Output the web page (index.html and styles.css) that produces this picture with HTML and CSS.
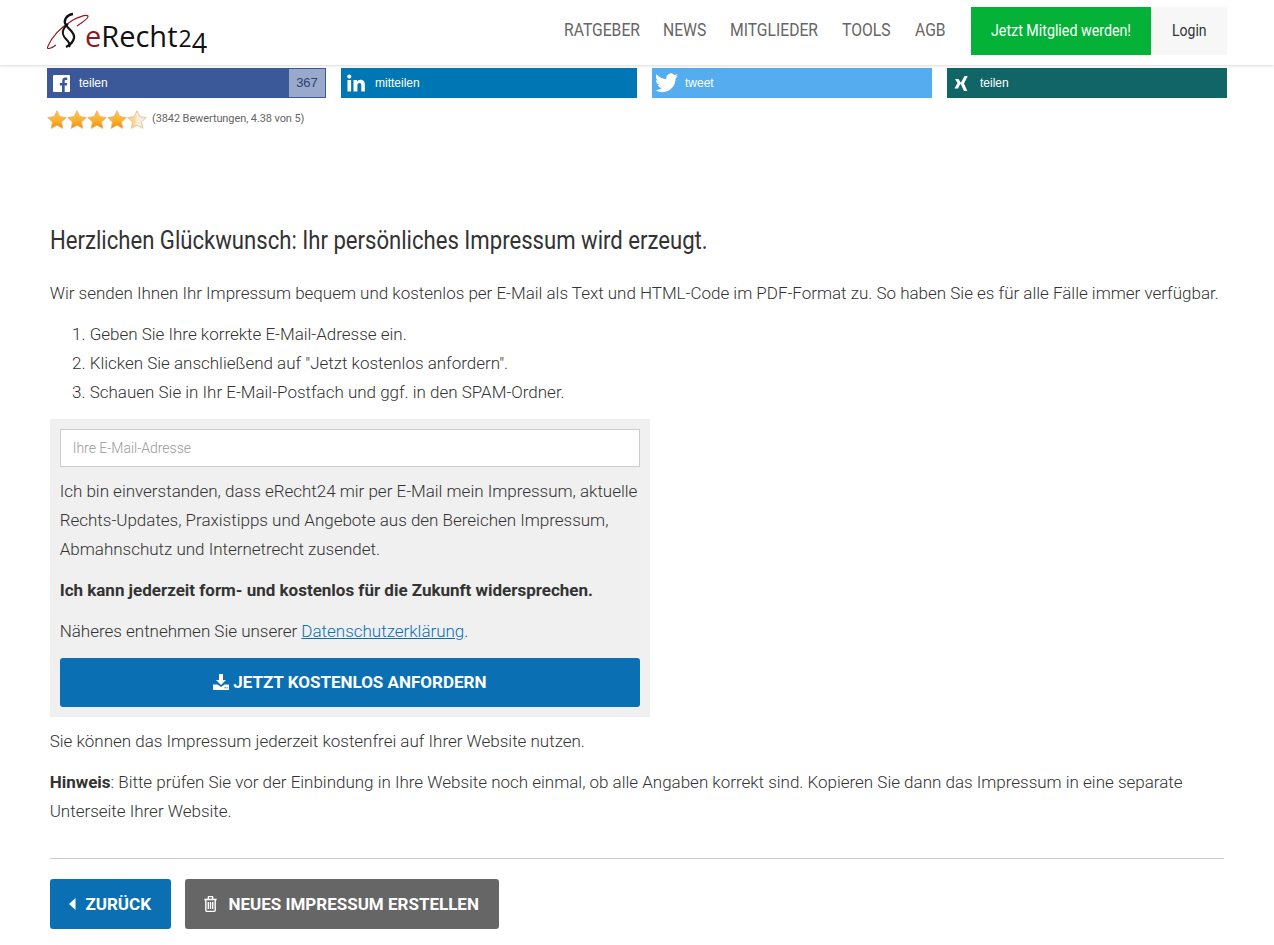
FILE: index.html
```html
<!DOCTYPE html>
<html lang="de">
<head>
<meta charset="utf-8">
<title>Impressum</title>
<link rel="stylesheet" href="styles.css">
</head>
<body>
<header class="topbar">
  <div class="topbar-inner">
    <a class="logo" href="#">
      <svg class="logo-mark" width="42" height="40" viewBox="0 0 42 40" aria-hidden="true">
        <path d="M.5 35 C5 24 16 14 26 8 C32 5 39 2 41 4 C42 6 36 10 30 14 M.5 35 C0 38 5 36 9 33" fill="none" stroke="#8d1a1f" stroke-width="1.200"/>
        <path d="M26 2 C19 3 16 9 19 13 C22 18 28 20 27 26 C26 31 23 33 19 35" fill="none" stroke="#111" stroke-width="2.300"/>
        <path d="M21 12 C15 17 14 22 19 27 C21 29 24 32 22 35" fill="none" stroke="#111" stroke-width="2"/>
      </svg>
      <span class="logo-text"><span class="logo-e">e</span>Recht<span class="logo-two">2</span><span class="logo-four">4</span></span>
    </a>
    <nav class="nav">
      <a class="nav-link" href="#"><span class="cond">RATGEBER</span></a>
      <a class="nav-link" href="#"><span class="cond">NEWS</span></a>
      <a class="nav-link" href="#"><span class="cond">MITGLIEDER</span></a>
      <a class="nav-link" href="#"><span class="cond">TOOLS</span></a>
      <a class="nav-link" href="#"><span class="cond">AGB</span></a>
      <a class="nav-cta" href="#"><span class="cond">Jetzt Mitglied werden!</span></a>
      <a class="nav-login" href="#"><span class="cond">Login</span></a>
    </nav>
  </div>
</header>

<div class="share">
  <a class="share-btn fb" href="#">
    <svg class="share-icon" width="17" height="17" viewBox="0 0 17 17" aria-hidden="true"><rect width="17" height="17" rx="1" fill="#fff"/><path d="M11.700 17v-6.500h2.200l.3-2.600h-2.500V6.300c0-.8.2-1.300 1.300-1.300h1.300V2.700c-.3 0-1-.1-1.900-.1-1.900 0-3.200 1.200-3.200 3.300v2H6.800v2.600H9V17z" fill="#3b5998"/></svg>
    <span class="share-label fb-label">teilen</span>
    <span class="share-count">367</span>
  </a>
  <a class="share-btn li" href="#">
    <svg class="share-icon" width="18" height="18" viewBox="0 0 18 18" aria-hidden="true"><path d="M.5 6h3.600v11.500H.5zM2.300.5a2.100 2.100 0 1 1 0 4.200 2.100 2.100 0 0 1 0-4.200zM6.500 6H10v1.600c.5-.9 1.700-1.900 3.500-1.900 3.700 0 4.400 2.400 4.400 5.600v6.200h-3.600V12c0-1.300 0-3-1.800-3s-2.100 1.400-2.100 2.900v5.600H6.500z" fill="#fff"/></svg>
    <span class="share-label">mitteilen</span>
  </a>
  <a class="share-btn tw" href="#">
    <svg class="share-icon tw-icon" width="23" height="20" viewBox="0 0 24 20" aria-hidden="true"><path d="M24 2.400c-.9.400-1.800.7-2.800.8 1-.6 1.800-1.600 2.200-2.700-1 .6-2 1-3.100 1.200A4.900 4.900 0 0 0 11.900 6.200C7.800 6 4.200 4 1.700.9c-.4.700-.7 1.600-.7 2.500 0 1.700.9 3.200 2.200 4.100-.8 0-1.600-.2-2.200-.6v.1c0 2.400 1.700 4.400 3.900 4.800-.4.100-.8.200-1.300.2-.3 0-.6 0-.9-.1.600 2 2.400 3.400 4.600 3.400A9.900 9.900 0 0 1 0 17.400 14 14 0 0 0 7.500 19.600c9.100 0 14-7.500 14-14v-.6c1-.7 1.800-1.600 2.500-2.600z" fill="#fff"/></svg>
    <span class="share-label tw-label">tweet</span>
  </a>
  <a class="share-btn xi" href="#">
    <svg class="share-icon" width="15" height="19" viewBox="0 0 15 19" aria-hidden="true"><path d="M2 5h3.500l2.500 4-3 5.500H1.500l3-5.500zM11.500 2h3.300L11 9.500 14.300 17H11L7.500 9.500z" fill="#fff"/></svg>
    <span class="share-label xi-label">teilen</span>
  </a>
</div>

<div class="rating">
  <div class="stars">
    <svg class="star" width="20" height="19" viewBox="0.4 0.3 19.2 18.4" aria-hidden="true"><use href="#star-full"/></svg>
    <svg class="star" width="20" height="19" viewBox="0.4 0.3 19.2 18.4" aria-hidden="true"><use href="#star-full"/></svg>
    <svg class="star" width="20" height="19" viewBox="0.4 0.3 19.2 18.4" aria-hidden="true"><use href="#star-full"/></svg>
    <svg class="star" width="20" height="19" viewBox="0.4 0.3 19.2 18.4" aria-hidden="true"><use href="#star-full"/></svg>
    <svg class="star" width="20" height="19" viewBox="0.4 0.3 19.2 18.4" aria-hidden="true"><path d="M10 1l2.700 5.700 6.300.9-4.600 4.300 1.200 6.200L10 15.100l-5.600 3 1.200-6.200L1 7.600l6.300-.9z" fill="url(#star-half)" stroke="#e8c48e" stroke-width=".9" stroke-linejoin="round"/></svg>
  </div>
  <span class="rating-text">(3842 Bewertungen, 4.38 von 5)</span>
  <svg class="defs" width="0" height="0" aria-hidden="true">
    <defs>
      <linearGradient id="star-grad" x1="0" y1="0" x2="0" y2="1"><stop offset="0" stop-color="#fdc84a"/><stop offset=".55" stop-color="#fbb12a"/><stop offset="1" stop-color="#f28a0e"/></linearGradient>
      <linearGradient id="star-half" x1="0" y1="0" x2="1" y2="0"><stop offset=".35" stop-color="#fcd48a"/><stop offset=".5" stop-color="#f6efe2"/><stop offset="1" stop-color="#ececec"/></linearGradient>
      <path id="star-full" d="M10 1l2.700 5.700 6.300.9-4.600 4.300 1.200 6.200L10 15.100l-5.600 3 1.200-6.200L1 7.600l6.300-.9z" fill="url(#star-grad)" stroke="#e7b676" stroke-width=".9" stroke-linejoin="round"/>
    </defs>
  </svg>
</div>

<main class="content">
  <h2 class="title"><span class="title-text">Herzlichen Glückwunsch: Ihr persönliches Impressum wird erzeugt.</span></h2>
  <p class="para">Wir senden Ihnen Ihr Impressum bequem und kostenlos per E-Mail als Text und HTML-Code im PDF-Format zu. So haben Sie es für alle Fälle immer verfügbar.</p>
  <ol class="steps">
    <li>Geben Sie Ihre korrekte E-Mail-Adresse ein.</li>
    <li>Klicken Sie anschließend auf "Jetzt kostenlos anfordern".</li>
    <li>Schauen Sie in Ihr E-Mail-Postfach und ggf. in den SPAM-Ordner.</li>
  </ol>
  <form class="form-box">
    <input class="email" type="text" placeholder="Ihre E-Mail-Adresse">
    <p class="para">Ich bin einverstanden, dass eRecht24 mir per E-Mail mein Impressum, aktuelle Rechts-Updates, Praxistipps und Angebote aus den Bereichen Impressum, Abmahnschutz und Internetrecht zusendet.</p>
    <p class="para"><strong>Ich kann jederzeit form- und kostenlos für die Zukunft widersprechen.</strong></p>
    <p class="para">Näheres entnehmen Sie unserer <a class="link" href="#">Datenschutzerklärung</a>.</p>
    <button class="btn btn-wide" type="button">
      <svg class="btn-icon" width="16" height="16" viewBox="0 0 16 16" aria-hidden="true"><path d="M6 0h4v6h3L8 11 3 6h3zM0 10.500h4.500L8 13l3.500-2.500H16V16H0zM11.500 13.200h1.200v1h-1.200zM13.500 13.200h1.200v1h-1.200z" fill="#fff" fill-rule="evenodd"/></svg>
      JETZT KOSTENLOS ANFORDERN
    </button>
  </form>
  <p class="para after-box">Sie können das Impressum jederzeit kostenfrei auf Ihrer Website nutzen.</p>
  <p class="para"><strong>Hinweis</strong>: Bitte prüfen Sie vor der Einbindung in Ihre Website noch einmal, ob alle Angaben korrekt sind. Kopieren Sie dann das Impressum in eine separate Unterseite Ihrer Website.</p>
  <hr class="rule">
  <div class="actions">
    <button class="btn btn-back" type="button">
      <svg class="btn-icon" width="7" height="12" viewBox="0 0 7 12" aria-hidden="true"><path d="M6.500 0v12L0 6z" fill="#fff"/></svg>
      ZURÜCK
    </button>
    <button class="btn btn-new" type="button">
      <svg class="btn-icon" width="13" height="16" viewBox="0 0 13 16" aria-hidden="true"><path d="M.3 3.500h12.400M4.300 3.500V1.300c0-.5.300-.8.800-.8h2.800c.5 0 .8.300.8.800v2.200M1.800 3.500V14c0 .8.500 1.400 1.200 1.400h7c.7 0 1.200-.6 1.200-1.400V3.500M4.300 6v7M6.500 6v7M8.700 6v7" fill="none" stroke="#fff" stroke-width="1.400"/></svg>
      NEUES IMPRESSUM ERSTELLEN
    </button>
  </div>
</main>
</body>
</html>
```

FILE: styles.css
```css
* { box-sizing: border-box; }
html, body { margin: 0; padding: 0; }
body {
  background: #fff;
  color: #333;
  font-family: Roboto, "Liberation Sans", sans-serif;
  font-weight: 300;
  font-size: 17px;
  line-height: 29px;
  overflow-x: hidden;
}
a { text-decoration: none; color: inherit; }

.topbar {
  height: 65px;
  background: #fff;
  box-shadow: 0 1px 3px rgba(0, 0, 0, .15);
  position: relative;
}
.topbar-inner {
  display: flex;
  justify-content: space-between;
  padding: 7px 47px 0 47px;
}
.logo { display: flex; align-items: flex-start; width: 165px; height: 50px; }
.logo-mark { margin-top: 5px; flex: none; }
.logo-text {
  margin: 7px 0 0 -4px;
  font-family: "Open Sans", sans-serif;
  font-weight: 400;
  font-size: 29px;
  line-height: 44px;
  color: #111;
  white-space: nowrap;
}
.logo-e { color: #8d1a1f; }
.logo-two { font-size: 23px; margin-left: 1px; }
.logo-four { display: inline-block; font-size: 27px; transform: translateY(6px); margin-left: 0; }

.nav { display: flex; align-items: stretch; height: 48px; }
.cond { display: inline-block; transform: scaleX(.825); transform-origin: left center; white-space: nowrap; }
.nav-link {
  font-size: 19px;
  font-weight: 400;
  color: #666;
  line-height: 46px;
  margin-right: 24px;
}
.nav-link:nth-child(1) { width: 75px; }
.nav-link:nth-child(2) { width: 43px; }
.nav-link:nth-child(3) { width: 88px; }
.nav-link:nth-child(4) { width: 49px; }
.nav-link:nth-child(5) { width: 32px; }
.nav-cta {
  width: 180px;
  background: #03b237;
  color: #fff;
  font-size: 17px;
  font-weight: 400;
  line-height: 46px;
  padding-left: 20px;
}
.nav-cta .cond { transform: scaleX(.838); }
.nav-login {
  width: 76px;
  background: #f7f7f7;
  color: #333;
  font-size: 17px;
  font-weight: 400;
  line-height: 46px;
  padding-left: 21px;
}

.share {
  display: grid;
  grid-template-columns: 279px 296px 280px 280px;
  column-gap: 15px;
  margin: 3px 47px 0 47px;
}
.share-btn {
  height: 30px;
  display: flex;
  align-items: center;
  color: #fff;
  font-family: "Liberation Sans", Arial, sans-serif;
  font-weight: 400;
  font-size: 12px;
  padding-left: 6px;
}
.share-icon { flex: none; }
.share-label { margin-left: 10px; line-height: 30px; }
.fb { background: #3b5998; }
.li { background: #0077b5; }
.tw { background: #55acee; padding-left: 3px; }
.xi { background: #126567; }
.fb-label { margin-left: 9px; }
.tw-label { margin-left: 7px; }
.xi-label { margin-left: 12px; }
.share-count {
  margin-left: auto;
  width: 36px;
  height: 28px;
  margin-right: 1px;
  background: #98a9cc;
  color: #2e4270;
  font-size: 13px;
  line-height: 28px;
  text-align: center;
}

.rating { display: flex; align-items: center; margin: 11px 0 0 47px; height: 20px; }
.stars { display: flex; }
.star { display: block; flex: none; }
.rating-text { font-family: Roboto, sans-serif; font-weight: 400; font-size: 11px; letter-spacing: -.1px; color: #666; margin-left: 5px; line-height: 16px; margin-top: -1px; }
.defs { position: absolute; }

.content { padding: 0 50px 0 49.7px; margin-top: 96px; letter-spacing: -.012px; }
.title {
  margin: 0 0 24px;
  font-family: Roboto, sans-serif;
  font-weight: 400;
  font-size: 26px;
  line-height: 30px;
  color: #333;
}
.title-text { display: inline-block; transform: scaleX(.851); transform-origin: left center; white-space: nowrap; }
.para { margin: 0 0 12px; }
.steps { margin: 0 0 12px; padding-left: 40px; }
.form-box {
  width: 600.3px;
  background: #f0f0f0;
  padding: 10px;
  margin-bottom: 10px;
}
.email {
  display: block;
  width: 100%;
  height: 38px;
  border: 1px solid #ccc;
  background: #fff;
  padding: 0 12px;
  margin-bottom: 10px;
  font: 300 14px Roboto, sans-serif;
}
.email::placeholder { color: #999; }
strong { font-weight: 700; color: #333; }
.link { color: #0a70b3; text-decoration: underline; }
.btn {
  border: 0;
  border-radius: 3px;
  color: #fff;
  font-family: Roboto, sans-serif;
  font-weight: 700;
  font-size: 17px;
  line-height: 24px;
  background: #0a70b3;
  display: flex;
  align-items: center;
  justify-content: center;
  padding: 0;
}
.btn-wide { width: 100%; height: 49px; padding-bottom: 2px; }
.btn-icon { flex: none; margin-right: 4px; }
.after-box { margin-bottom: 12px; }
.rule { border: 0; border-top: 1px solid #ccc; margin: 32px 0 20px; }
.actions { display: flex; gap: 14px; }
.btn-back { width: 121px; height: 50px; }
.btn-back .btn-icon { margin-right: 9px; }
.btn-new { width: 314px; height: 50px; background: #666; }
.btn-new .btn-icon { margin-right: 11px; }
```
